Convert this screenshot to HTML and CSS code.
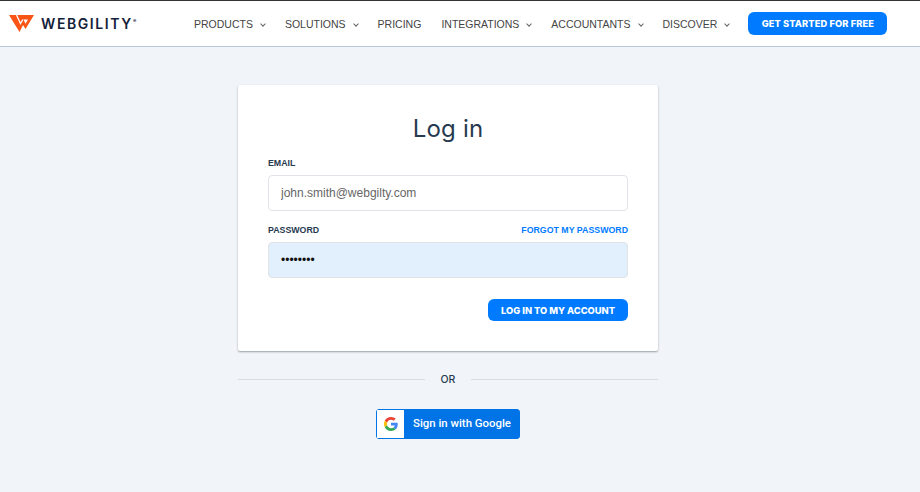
FILE: index.html

```html
<!DOCTYPE html>
<html lang="en">
<head>
  <meta charset="UTF-8" />
  <meta name="viewport" content="width=device-width, initial-scale=1.0" />
  <title>Webgility - Log in</title>
  <link rel="stylesheet" href="styles.css">
</head>
<body>
  <header class="topbar">
    <a class="logo" href="#">
      <svg class="logo-mark" width="25" height="17" viewBox="0 0 25 17">
        <path fill="#fa5514" d="M0 0H25L16.500 14L14 10L10.500 17Z"/>
        <path fill="none" stroke="#fff" stroke-width="1.300" d="M7.500 0L11.500 8.500L13.800 4.500"/>
        <path fill="#fff" d="M14.500 4.500H19L16.500 8.800Z"/>
      </svg>
      <span class="logo-text">WEBGILITY<sup>®</sup></span>
    </a>
    <nav class="nav">
      <a href="#">PRODUCTS<span class="chev"></span></a>
      <a href="#">SOLUTIONS<span class="chev"></span></a>
      <a href="#">PRICING</a>
      <a href="#">INTEGRATIONS<span class="chev"></span></a>
      <a href="#">ACCOUNTANTS<span class="chev"></span></a>
      <a href="#">DISCOVER<span class="chev"></span></a>
    </nav>
    <a class="btn btn-start" href="#">GET STARTED FOR FREE</a>
  </header>

  <main class="page">
    <form class="card">
      <h1>Log in</h1>
      <div class="label-row"><label for="email">EMAIL</label></div>
      <input class="field" id="email" type="text" value="john.smith@webgilty.com" />
      <div class="label-row label-row-pass">
        <label for="password">PASSWORD</label>
        <a class="forgot" href="#">FORGOT MY PASSWORD</a>
      </div>
      <input class="field field-filled" id="password" type="password" value="password" />
      <div class="actions">
        <button class="btn btn-login" type="button">LOG IN TO MY ACCOUNT</button>
      </div>
    </form>

    <div class="divider"><span>OR</span></div>

    <a class="google" href="#">
      <span class="google-icon">
        <svg width="14" height="14" viewBox="0 0 48 48">
          <path fill="#EA4335" d="M24 9.500c3.500 0 6.700 1.200 9.200 3.600l6.900-6.900C35.900 2.400 30.400 0 24 0 14.600 0 6.500 5.400 2.600 13.200l8 6.200C12.500 13.700 17.800 9.500 24 9.500z"/>
          <path fill="#4285F4" d="M47 24.500c0-1.600-.1-3.100-.4-4.500H24v9h13c-.6 3-2.200 5.500-4.800 7.200l7.700 6C44.400 38 47 31.800 47 24.500z"/>
          <path fill="#FBBC05" d="M10.600 28.600c-.5-1.400-.8-3-.8-4.600s.3-3.200.8-4.600l-8-6.200C.9 16.500 0 20.100 0 24s.9 7.500 2.600 10.800l8-6.200z"/>
          <path fill="#34A853" d="M24 48c6.500 0 11.900-2.100 15.900-5.800l-7.700-6c-2.200 1.400-4.900 2.300-8.200 2.300-6.200 0-11.500-4.200-13.400-9.900l-8 6.200C6.500 42.600 14.600 48 24 48z"/>
        </svg>
      </span>
      <span class="google-text">Sign in with Google</span>
    </a>
  </main>
</body>
</html>
```

FILE: styles.css

```css
* {
  box-sizing: border-box;
}
html, body {
  height: 100%;
}
body {
  margin: 0;
  font-family: 'Liberation Sans', Arial, sans-serif;
  background: #f1f5f9;
  color: #273a50;
  overflow: hidden;
}
a {
  text-decoration: none;
}

/* top bar */
.topbar {
  display: flex;
  align-items: center;
  height: 47px;
  padding: 0 0 0 9px;
  background: #fff;
  border-top: 1px solid #333;
  border-bottom: 1px solid #b9c6d6;
}
.logo {
  display: flex;
  align-items: center;
  gap: 7px;
  width: 185px;
  flex: none;
}
.logo-mark {
  display: block;
  flex: none;
}
.logo-text {
  font-family: 'Inter', sans-serif;
  font-size: 14px;
  font-weight: 600;
  letter-spacing: 1.6px;
  color: #14213a;
  white-space: nowrap;
}
.logo-text sup {
  font-size: 5px;
  letter-spacing: 0;
  vertical-align: 6px;
  line-height: 0;
}
.nav {
  display: flex;
  gap: 20px;
  flex: none;
}
.nav a {
  display: flex;
  align-items: center;
  font-size: 10.5px;
  color: #444;
  white-space: nowrap;
}
.chev {
  width: 4px;
  height: 4px;
  margin: 1px 0 0 8px;
  border-right: 1.5px solid #666;
  border-bottom: 1.5px solid #666;
  transform: rotate(45deg);
}
.btn {
  display: flex;
  align-items: center;
  justify-content: center;
  border: none;
  border-radius: 6px;
  background: #007bff;
  color: #fff;
  font-family: 'Inter', sans-serif;
  font-weight: 800;
  font-size: 9.3px;
  white-space: nowrap;
}
.btn-start {
  flex: none;
  width: 139px;
  height: 23px;
  margin-left: 19px;
  margin-top: -1px;
  letter-spacing: 0.1px;
}

/* login */
.page {
  display: flex;
  flex-direction: column;
  align-items: center;
  padding: 38px 24px 0 0;
}
.card {
  width: 420px;
  height: 266px;
  padding: 30px;
  background: #fff;
  border-radius: 2px;
  box-shadow: 0 1px 2px rgba(40, 50, 70, 0.45);
}
.card h1 {
  margin: 0;
  height: 28px;
  font-family: 'Inter', sans-serif;
  font-size: 24px;
  font-weight: 400;
  letter-spacing: 0.2px;
  line-height: 28px;
  text-align: center;
  color: #273a50;
}
.label-row {
  display: flex;
  justify-content: space-between;
  align-items: center;
  height: 14px;
  padding-top: 1px;
  margin-top: 12px;
  margin-bottom: 6px;
  font-size: 8.8px;
  font-weight: 700;
}
.label-row-pass {
  margin-top: 11px;
}
.label-row label {
  color: #273a50;
}
.forgot {
  color: #007bff;
}
.field {
  display: block;
  width: 360px;
  height: 36px;
  padding: 0 12px;
  border: 1px solid #e0e3e8;
  border-radius: 4px;
  background: #fff;
  font-family: 'Liberation Sans', Arial, sans-serif;
  font-size: 12px;
  color: #666;
}
.field-filled {
  background: #e2effd;
  color: #111;
}
.actions {
  display: flex;
  justify-content: flex-end;
  margin-top: 21px;
}
.btn-login {
  width: 140px;
  height: 22px;
}
.divider {
  display: flex;
  align-items: center;
  width: 420px;
  margin-top: 20px;
  font-family: 'Inter', sans-serif;
  font-size: 10.5px;
  font-weight: 500;
  color: #273a50;
}
.divider::before, .divider::after {
  content: "";
  flex: 1;
  height: 1px;
  background: #d9dde2;
}
.divider span {
  width: 46px;
  height: 16px;
  padding-top: 1px;
  line-height: 16px;
  text-align: center;
}
.google {
  display: flex;
  align-items: center;
  width: 144px;
  height: 30px;
  margin-top: 22px;
  border: 1px solid #0073e6;
  border-radius: 3px;
  background: #0073e6;
  color: #fff;
}
.google-icon {
  display: flex;
  align-items: center;
  justify-content: center;
  width: 27px;
  height: 28px;
  background: #fff;
}
.google-text {
  margin: 0 0 2px 9px;
  font-family: 'Roboto', sans-serif;
  font-size: 11.4px;
  font-weight: 500;
  white-space: nowrap;
}
```
